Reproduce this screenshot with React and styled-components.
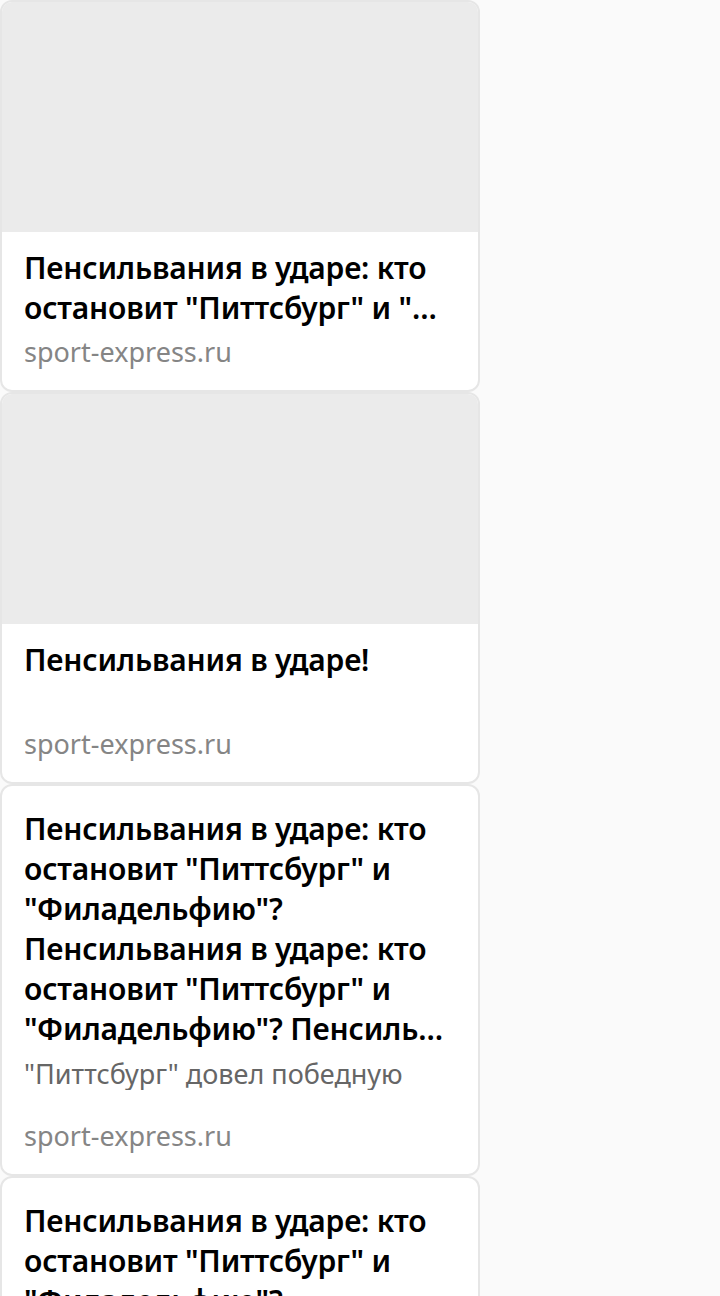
import React from "react";
import styled, { createGlobalStyle } from "styled-components";

const Global = createGlobalStyle`
  html, body { margin: 0; padding: 0; background: #fafafa; }
  body { font-family: "Noto Sans", "Open Sans", sans-serif; }
  * { box-sizing: border-box; }
`;

const Feed = styled.div`
  width: 480px;
  display: flex;
  flex-direction: column;
`;

const Card = styled.article`
  height: 392px;
  display: flex;
  flex-direction: column;
  background: #fff;
  border: 2px solid #e6e6e6;
  border-radius: 12px;
  overflow: hidden;
`;

const Picture = styled.div`
  flex: 0 0 230px;
  background: #ebebeb;
`;

const Body = styled.div`
  flex: 1;
  display: flex;
  flex-direction: column;
  padding: ${(p) => (p.$withImage ? "16px" : "23px")} 22px 22px;
  min-height: 0;
`;

const Title = styled.h2`
  margin: 0;
  font-size: 30px;
  line-height: 40px;
  font-weight: 600;
  letter-spacing: -0.2px;
  color: #000;
  display: -webkit-box;
  -webkit-box-orient: vertical;
  -webkit-line-clamp: ${(p) => p.$lines};
  overflow: hidden;
`;

const Snippet = styled.p`
  margin: 9px 0 0;
  font-size: 27px;
  line-height: 32px;
  height: 32px;
  color: #666;
  overflow: hidden;
`;

const Source = styled.div`
  margin-top: auto;
  font-size: 27px;
  line-height: 32px;
  color: #858585;
`;

const longTitle =
  'Пенсильвания в ударе: кто остановит "Питтсбург" и "Филадельфию"? Пенсильвания в ударе: кто остановит "Питтсбург" и "Филадельфию"? Пенсиль…';

const items = [
  { image: true, title: 'Пенсильвания в ударе: кто остановит "Питтсбург" и "…', lines: 2 },
  { image: true, title: "Пенсильвания в ударе!", lines: 2 },
  { image: false, title: longTitle, lines: 6, snippet: '"Питтсбург" довел победную серию до шести матчей' },
  { image: false, title: longTitle, lines: 6, snippet: '"Питтсбург" довел победную серию до шести матчей' },
];

export default function App() {
  return (
    <>
      <Global />
      <Feed>
        {items.map((it, i) => (
          <Card key={i}>
            {it.image && <Picture />}
            <Body $withImage={it.image}>
              <Title $lines={it.lines}>{it.title}</Title>
              {it.snippet && <Snippet>{it.snippet}</Snippet>}
              <Source>sport-express.ru</Source>
            </Body>
          </Card>
        ))}
      </Feed>
    </>
  );
}
